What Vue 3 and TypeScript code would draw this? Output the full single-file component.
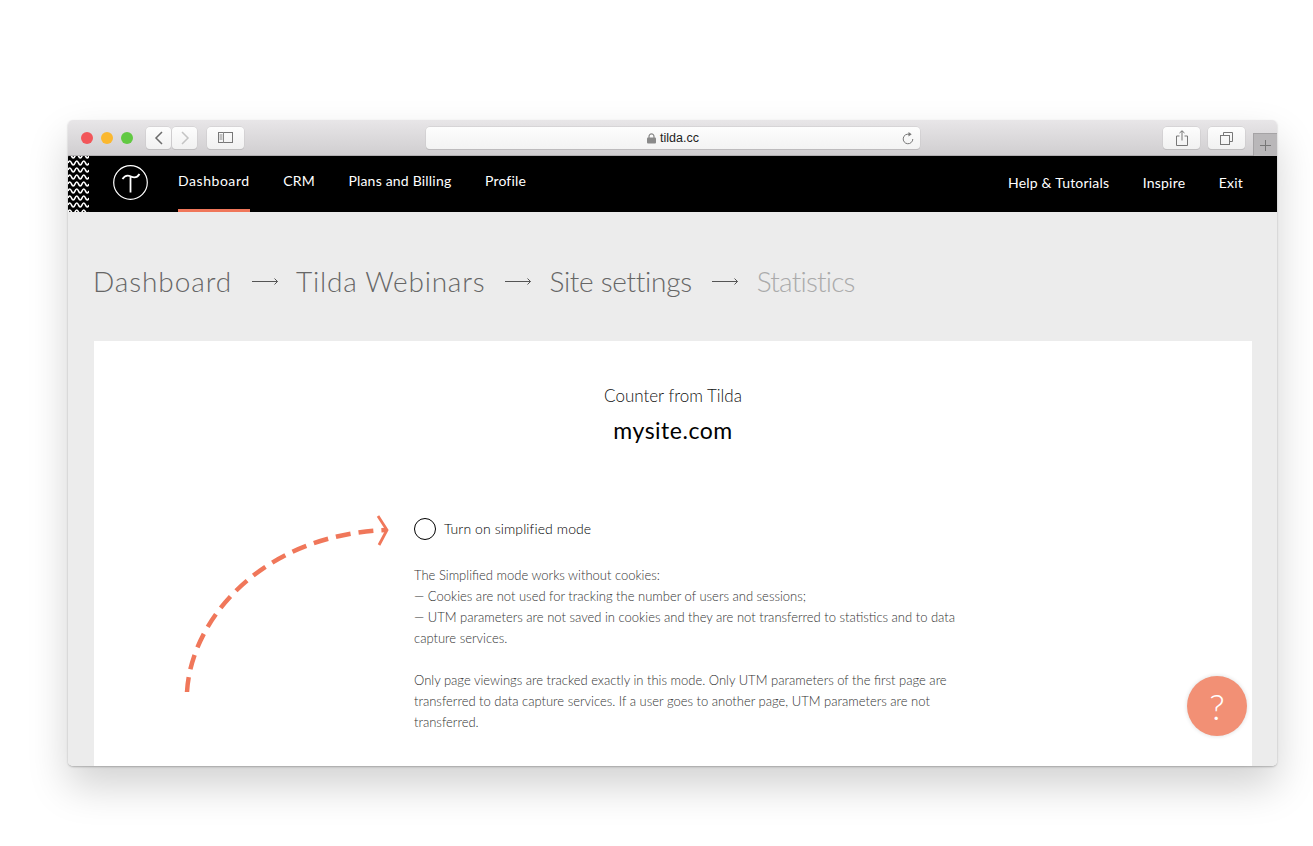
<script setup lang="ts">
interface NavItem { label: string; active?: boolean }
interface Crumb { label: string; track: number }
const navLeft: NavItem[] = [{ label: 'Dashboard', active: true }, { label: 'CRM' }, { label: 'Plans and Billing' }, { label: 'Profile' }]
const navRight: NavItem[] = [{ label: 'Help & Tutorials' }, { label: 'Inspire' }, { label: 'Exit' }]
const crumbs: Crumb[] = [
  { label: 'Dashboard', track: 0.9 },
  { label: 'Tilda Webinars', track: 0.78 },
  { label: 'Site settings', track: -0.3 }
]
</script>

<template>
  <div class="page">
    <div class="window">
      <div class="chrome">
        <div class="lights">
          <span class="light red"></span>
          <span class="light yellow"></span>
          <span class="light green"></span>
        </div>
        <div class="navpair">
          <button class="btn pair"><svg width="10" height="14" viewBox="0 0 10 14"><path d="M8 1 2 7l6 6" fill="none" stroke="#6b6b6b" stroke-width="1.5"/></svg></button>
          <button class="btn pair"><svg width="10" height="14" viewBox="0 0 10 14"><path d="m2 1 6 6-6 6" fill="none" stroke="#c4c4c4" stroke-width="1.5"/></svg></button>
        </div>
        <button class="btn side"><svg width="15" height="11" viewBox="0 0 15 11"><rect x=".5" y=".5" width="14" height="10" fill="none" stroke="#777"/><path d="M5.500 0v11M1.500 3h3M1.500 5h3M1.500 7h3" stroke="#888" fill="none"/></svg></button>
        <div class="address">
          <span class="host"><svg width="9" height="11" viewBox="0 0 9 11"><path d="M2 5V3.400a2.500 2.500 0 0 1 5 0V5" fill="none" stroke="#8a8a8a" stroke-width="1.200"/><rect y="4.600" width="9" height="6" rx="1" fill="#8a8a8a"/></svg>tilda.cc</span>
          <svg class="reload" width="12" height="13" viewBox="0 0 12 13"><path d="M7.200 2.300A4.800 4.800 0 1 0 10.800 7" fill="none" stroke="#777" stroke-width="1"/><path d="M6.500 0v4.400l3.200-2.200z" fill="#777"/></svg>
        </div>
        <div class="tools">
          <button class="btn tool"><svg width="12" height="16" viewBox="0 0 12 16"><path d="M3.500 6H.5v9.500h11V6h-3M6 10.500V.8M3.500 3 6 .8 8.500 3" fill="none" stroke="#777"/></svg></button>
          <button class="btn tool"><svg width="13" height="13" viewBox="0 0 13 13"><rect x=".5" y="3.500" width="9" height="9" fill="none" stroke="#777"/><path d="M3.500 3.500v-3h9v9h-3" fill="none" stroke="#777"/></svg></button>
        </div>
        <div class="newtab"><svg width="11" height="11" viewBox="0 0 11 11"><path d="M5.500 0v11M0 5.500h11" stroke="#777" fill="none"/></svg></div>
      </div>

      <header class="topnav">
        <svg class="waves" width="21" height="56" viewBox="0 0 21 56">
          <g fill="none" stroke="#fff" stroke-width="1.700">
            <path v-for="n in 9" :key="n" :d="`M0 ${n * 7 - 7} q1.750 -4 3.500 0 t3.500 0 t3.500 0 t3.500 0 t3.500 0 t3.500 0`"/>
          </g>
        </svg>
        <svg class="logo" width="35" height="35" viewBox="0 0 35 35">
          <circle cx="17.500" cy="17.500" r="16.800" fill="none" stroke="#fff" stroke-width="1.200"/>
          <path d="M9.500 14C12 10 15 10 18 11.500S24 13 26.500 9M17.500 11.500V27.500" fill="none" stroke="#fff" stroke-width="1.800"/>
        </svg>
        <nav class="menu">
          <a v-for="item in navLeft" :key="item.label" class="item" :class="{ active: item.active }">{{ item.label }}</a>
        </nav>
        <nav class="menu right">
          <a v-for="item in navRight" :key="item.label" class="item">{{ item.label }}</a>
        </nav>
      </header>

      <main class="content">
        <div class="crumbs">
          <template v-for="c in crumbs" :key="c.label">
            <span class="crumb" :style="{ letterSpacing: c.track + 'px' }">{{ c.label }}</span>
            <svg class="sep" width="26" height="9" viewBox="0 0 26 9"><path d="M0 4.500h25.500M22.500 1.500l3 3-3 3" fill="none" stroke="#555" stroke-width="1"/></svg>
          </template>
          <span class="crumb last">Statistics</span>
        </div>

        <section class="card">
          <svg class="arrow" width="210" height="185" viewBox="0 0 210 185">
            <path d="M4 180C8 108 78 23 203 18" fill="none" stroke="#f0775a" stroke-width="4.500" stroke-dasharray="15 8"/>
            <path d="M195 4l9 14-8 15" fill="none" stroke="#f0775a" stroke-width="2.800"/>
          </svg>
          <div class="sub">Counter from Tilda</div>
          <div class="site">mysite.com</div>
          <div class="body">
            <label class="check"><span class="radio"></span>Turn on simplified mode</label>
            <p class="desc">The Simplified mode works without cookies:<br>— Cookies are not used for tracking the number of users and sessions;<br>— UTM parameters are not saved in cookies and they are not transferred to statistics and to data capture services.</p>
            <p class="desc">Only page viewings are tracked exactly in this mode. Only UTM parameters of the first page are transferred to data capture services. If a user goes to another page, UTM parameters are not transferred.</p>
          </div>
        </section>
        <button class="fab">?</button>
      </main>
    </div>
  </div>
</template>

<style>
html, body { margin: 0; background: #fff; }
</style>

<style scoped>
.page {
  box-sizing: border-box;
  height: 846px;
  padding: 120px 36px 0 68px;
  overflow: hidden;
  font-family: Lato, "Liberation Sans", sans-serif;
}
.window {
  position: relative;
  height: 646px;
  border-radius: 5px;
  overflow: hidden;
  display: flex;
  flex-direction: column;
  box-shadow: 0 1px 2px rgba(0,0,0,.25), 0 20px 40px rgba(0,0,0,.18);
}
.chrome {
  height: 36px;
  box-sizing: border-box;
  flex: none;
  display: flex;
  align-items: center;
  position: relative;
  background: linear-gradient(#e8e6e8, #d0ced0);
  border-bottom: 1px solid #b0aeb0;
}
.lights { display: flex; gap: 8px; margin-left: 13px; }
.light { width: 12px; height: 12px; border-radius: 50%; }
.red { background: #f2565a; }
.yellow { background: #fbb82f; }
.green { background: #61c942; }
.btn {
  padding: 0;
  border: 0;
  background: linear-gradient(#fdfdfd, #f1f1f1);
  box-shadow: 0 0 0 .5px #c9c8c9, 0 1px 0 #b5b4b5;
  border-radius: 4px;
  height: 22px;
  display: flex;
  align-items: center;
  justify-content: center;
}
.navpair { display: flex; gap: 1px; margin-left: 13px; }
.pair { width: 25px; }
.side { width: 37px; margin-left: 10px; }
.address {
  position: absolute;
  left: 358px;
  top: 7px;
  width: 494px;
  height: 22px;
  border-radius: 4px;
  background: linear-gradient(#fdfdfd, #f3f3f3);
  box-shadow: 0 0 0 .5px #c9c8c9, 0 1px 0 #b0afb0;
  display: flex;
  align-items: center;
  justify-content: center;
}
.host {
  display: flex;
  align-items: center;
  gap: 4px;
  font: 12.500px "Liberation Sans", sans-serif;
  color: #222;
}
.reload { position: absolute; right: 6px; top: 5px; }
.tools { display: flex; gap: 8px; position: absolute; left: 1095px; top: 7px; }
.tool { width: 37px; }
.newtab {
  position: absolute;
  right: 0;
  bottom: -1px;
  width: 24px;
  height: 23px;
  background: #b9b7b9;
  border: 1px solid #a5a3a5;
  border-width: 1px 0 0 1px;
  box-sizing: border-box;
  display: flex;
  align-items: center;
  justify-content: center;
}
.topnav {
  height: 56px;
  flex: none;
  background: #000;
  display: flex;
  position: relative;
  overflow: hidden;
}
.waves { flex: none; }
.logo { flex: none; margin: 9px 0 0 24px; }
.menu { display: flex; gap: 33.500px; margin-left: 30px; }
.menu.right { margin-left: auto; margin-right: 34px; }
.item {
  color: #fff;
  font-size: 14px;
  height: 56px;
  line-height: 50px;
  box-sizing: border-box;
  letter-spacing: .2px;
}
.right .item { line-height: 54px; }
.active { border-bottom: 3px solid #f0775a; letter-spacing: .55px; }
.content {
  flex: 1;
  min-height: 0;
  background: #ececec;
  padding: 0 25px 0 26px;
  position: relative;
}
.crumbs {
  height: 129px;
  padding-top: 9px;
  box-sizing: border-box;
  display: flex;
  align-items: center;
  gap: 20px;
  margin-left: -1px;
}
.crumb {
  font-size: 28px;
  font-weight: 300;
  color: #666;
  white-space: nowrap;
}
.crumb.last { color: #aaa; letter-spacing: -.8px; margin-left: 1px; }
.sep { flex: none; margin-right: -2px; }
.card {
  background: #fff;
  height: 500px;
  position: relative;
  text-align: center;
  padding-top: 44px;
  box-sizing: border-box;
}
.arrow { position: absolute; left: 89px; top: 171px; }
.sub { font-size: 17px; font-weight: 300; color: #111; line-height: 22px; }
.site { font-size: 23px; font-weight: 400; color: #000; line-height: 30px; margin-top: 8px; letter-spacing: .5px; }
.body { text-align: left; margin: 73px 0 0 320px; width: 545px; }
.check {
  display: flex;
  align-items: center;
  gap: 8px;
  font-size: 14px;
  font-weight: 300;
  letter-spacing: .1px;
  color: #000;
  line-height: 22px;
}
.radio {
  width: 20px;
  height: 20px;
  border: 1px solid #000;
  border-radius: 50%;
  flex: none;
}
.desc {
  margin: 0 0 21px;
  font-size: 13px;
  font-weight: 300;
  line-height: 21px;
  color: #333;
}
.check + .desc { margin-top: 25px; }
.fab {
  position: absolute;
  right: 30px;
  bottom: 30px;
  width: 60px;
  height: 60px;
  border: 0;
  border-radius: 50%;
  background: #f29075;
  color: #fff;
  font: 300 36px Lato, sans-serif;
  padding: 0;
  box-shadow: 0 0 4px rgba(0,0,0,.15);
}
</style>
